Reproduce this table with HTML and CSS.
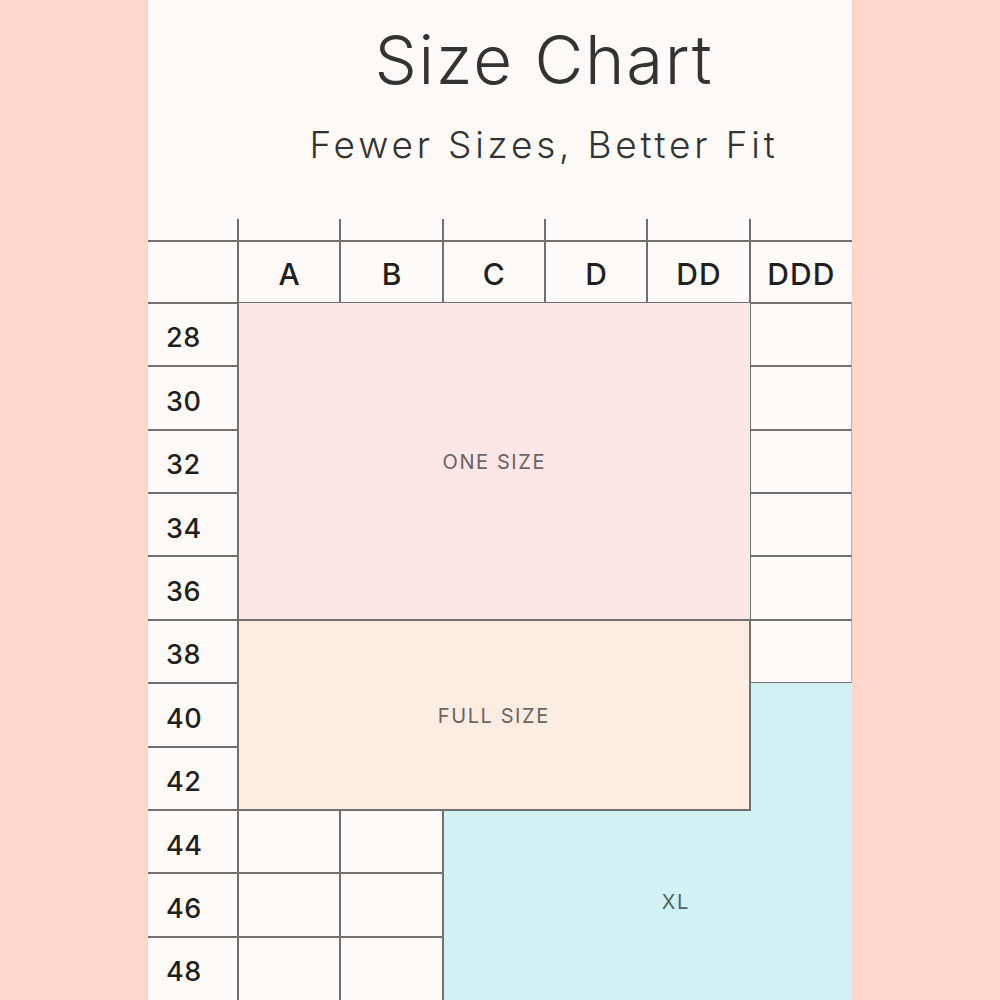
FILE: index.html
```html
<!DOCTYPE html>
<html lang="en">
<head>
<meta charset="utf-8">
<title>Size Chart</title>
<link rel="stylesheet" href="styles.css">
</head>
<body>
<main class="panel">
  <header class="heading">
    <h1 class="title">Size Chart</h1>
    <p class="subtitle">Fewer Sizes, Better Fit</p>
  </header>
  <section class="chart">
    <div class="stub c2"></div>
    <div class="stub c3"></div>
    <div class="stub c4"></div>
    <div class="stub c5"></div>
    <div class="stub c6"></div>
    <div class="stub c7"></div>

    <div class="corner"></div>
    <div class="cup c2">A</div>
    <div class="cup c3">B</div>
    <div class="cup c4">C</div>
    <div class="cup c5">D</div>
    <div class="cup c6">DD</div>
    <div class="cup c7">DDD</div>

    <div class="band r3 first">28</div>
    <div class="band r4">30</div>
    <div class="band r5">32</div>
    <div class="band r6">34</div>
    <div class="band r7">36</div>
    <div class="band r8">38</div>
    <div class="band r9">40</div>
    <div class="band r10">42</div>
    <div class="band r11">44</div>
    <div class="band r12">46</div>
    <div class="band r13">48</div>

    <div class="blank ddd r3 first"></div>
    <div class="blank ddd r4"></div>
    <div class="blank ddd r5"></div>
    <div class="blank ddd r6"></div>
    <div class="blank ddd r7"></div>
    <div class="blank ddd r8 last"></div>

    <div class="blank c2 r11"></div>
    <div class="blank c3 r11"></div>
    <div class="blank c2 r12"></div>
    <div class="blank c3 r12"></div>
    <div class="blank c2 r13"></div>
    <div class="blank c3 r13"></div>

    <div class="block xl"><span class="label">XL</span></div>
    <div class="block one"><span class="label">ONE SIZE</span></div>
    <div class="block full"><span class="label">FULL SIZE</span></div>
  </section>
</main>
</body>
</html>
```
FILE: styles.css
```css
html, body {
  margin: 0;
  padding: 0;
}
body {
  background: #fed6cb;
  font-family: Inter, "Liberation Sans", sans-serif;
  color: #2a2a2a;
}
.panel {
  width: 704px;
  height: 1000px;
  margin: 0 auto;
  background: #fefaf7;
  display: flex;
  flex-direction: column;
  overflow: hidden;
}
.heading {
  height: 219px;
  padding-left: 88px;
  text-align: center;
  box-sizing: border-box;
}
.title {
  margin: 0;
  padding-top: 20px;
  font-size: 67px;
  font-weight: 300;
  line-height: 80px;
  color: #333;
  letter-spacing: 1.8px;
}
.subtitle {
  margin: 0;
  padding-top: 23px;
  font-size: 37px;
  font-weight: 300;
  line-height: 44px;
  color: #333;
  letter-spacing: 3.8px;
}
.chart {
  --line: 2px solid #707070;
  display: grid;
  grid-template-columns: 90px repeat(6, 1fr);
  grid-template-rows: 21px 63px repeat(11, 1fr);
  flex: 1;
}
.chart > div {
  box-sizing: border-box;
}
.c2 { grid-column: 2; }
.c3 { grid-column: 3; }
.c4 { grid-column: 4; }
.c5 { grid-column: 5; }
.c6 { grid-column: 6; }
.c7 { grid-column: 7; }
.r3 { grid-row: 3; }
.r4 { grid-row: 4; }
.r5 { grid-row: 5; }
.r6 { grid-row: 6; }
.r7 { grid-row: 7; }
.r8 { grid-row: 8; }
.r9 { grid-row: 9; }
.r10 { grid-row: 10; }
.r11 { grid-row: 11; }
.r12 { grid-row: 12; }
.r13 { grid-row: 13; }

.stub {
  grid-row: 1;
  border-left: var(--line);
  margin-left: -1px;
}
.corner {
  grid-row: 2;
  grid-column: 1;
  border-top: var(--line);
  border-bottom: var(--line);
  margin-bottom: -1px;
}
.cup {
  grid-row: 2;
  border-top: var(--line);
  border-bottom: var(--line);
  border-left: var(--line);
  margin-left: -1px;
  margin-bottom: -1px;
  display: flex;
  align-items: center;
  justify-content: center;
  font-size: 30px;
  font-weight: 500;
  color: #1f1f1f;
  padding-top: 4px;
  letter-spacing: 1px;
}
.band {
  grid-column: 1;
  border-top: var(--line);
  margin-top: -1px;
  display: flex;
  align-items: center;
  padding-left: 18px;
  padding-top: 6px;
  font-size: 27px;
  font-weight: 500;
  color: #1f1f1f;
  letter-spacing: 0.5px;
}
.band.first {
  border-top: none;
  margin-top: 0;
}
.blank {
  border-left: var(--line);
  border-top: var(--line);
  margin-left: -1px;
  margin-top: -1px;
}
.ddd {
  grid-column: 7;
  border-right: 1px solid #b5b0ad;
}
.ddd.first {
  border-top: none;
  margin-top: 0;
}
.ddd.last {
  border-bottom: var(--line);
  margin-bottom: -1px;
}
.block {
  display: flex;
  justify-content: center;
  align-items: center;
  margin-left: -1px;
}
.label {
  font-size: 20px;
  font-weight: 400;
  letter-spacing: 1.6px;
}
.one {
  grid-row: 3 / 8;
  grid-column: 2 / 7;
  background: #fce6e6;
  border-left: var(--line);
  z-index: 1;
}
.one .label {
  color: #6a6363;
  padding-top: 2px;
}
.full {
  grid-row: 8 / 11;
  grid-column: 2 / 7;
  background: #fdece2;
  border: var(--line);
  margin-top: -1px;
  margin-bottom: -1px;
  margin-right: -1px;
  z-index: 2;
  align-items: flex-start;
  padding-top: 83px;
}
.full .label {
  color: #6b6660;
}
.xl {
  grid-row: 9 / 14;
  grid-column: 4 / 8;
  background: #d1f1f2;
  border-left: var(--line);
  z-index: 1;
  align-items: flex-end;
  padding-left: 56px;
  padding-bottom: 86px;
}
.xl .label {
  color: #4f6464;
}
```
